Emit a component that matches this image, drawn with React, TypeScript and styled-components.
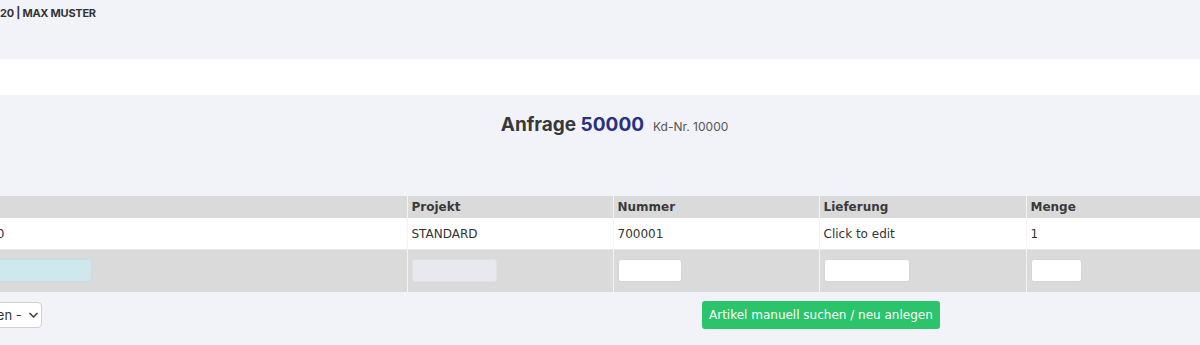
import React from 'react'
import styled, { createGlobalStyle } from 'styled-components'

const GlobalStyle = createGlobalStyle`
  html, body {
    margin: 0;
    padding: 0;
    background: #f2f3f8;
    overflow: hidden;
  }
  body {
    font-family: Inter, "Liberation Sans", sans-serif;
  }
`

const Viewport = styled.div`
  width: 1200px;
  height: 345px;
  overflow: hidden;
  background: #f2f3f8;
`

const TopBar = styled.div`
  height: 59px;
  box-sizing: border-box;
  padding: 6px 0 0 0;
  font-size: 11px;
  font-weight: 700;
  color: #333;
  letter-spacing: -0.25px;
  white-space: nowrap;
`

const Band = styled.div`
  height: 36px;
  background: #fff;
`

const TitleSection = styled.div`
  height: 101px;
  box-sizing: border-box;
  padding: 18px 0 0 29px;
  display: flex;
  justify-content: center;
  align-items: baseline;
  gap: 9px;
`

const Title = styled.h1`
  margin: 0;
  font-size: 19px;
  font-weight: 700;
  color: #38383a;
`

const DocNumber = styled.span`
  color: #28307f;
`

const CustomerNo = styled.span`
  font-size: 12px;
  color: #555;
`

const Table = styled.table`
  margin-left: -19px;
  width: 1400px;
  border-collapse: collapse;
  table-layout: fixed;
  font-family: "DejaVu Sans", Verdana, sans-serif;
  font-size: 12px;
  color: #333;
`

const HeadCell = styled.th`
  background: #dadada;
  height: 21px;
  padding: 0 4px;
  text-align: left;
  font-weight: 700;
  color: #3a3a3a;
  border-left: 1px solid #f4f4f4;
  &:first-child {
    border-left: none;
  }
`

const Row = styled.tr<{ $tone: 'white' | 'grey' }>`
  background: ${({ $tone }) => ($tone === 'white' ? '#fff' : '#dadada')};
  height: ${({ $tone }) => ($tone === 'white' ? '32px' : '42px')};
  border-top: 1px solid ${({ $tone }) => ($tone === 'white' ? '#dadada' : '#e8e8e8')};
`

const Cell = styled.td`
  padding: 0 4px;
  vertical-align: middle;
  border-left: 1px solid #f4f4f4;
  &:first-child {
    border-left: none;
    padding-left: 8px;
  }
`

const Field = styled.input<{ $w: number; $variant?: 'cyan' | 'muted' }>`
  display: block;
  box-sizing: border-box;
  width: ${({ $w }) => $w}px;
  height: 23px;
  border: 1px solid ${({ $variant }) => ($variant === 'cyan' ? '#c3dfe6' : $variant === 'muted' ? '#dfe0e5' : '#d6d6d6')};
  border-radius: 3px;
  background: ${({ $variant }) => ($variant === 'cyan' ? '#cfe8ee' : $variant === 'muted' ? '#e8e9ee' : '#fff')};
  margin: 0;
  font: inherit;
  padding: 2px 4px;
  outline: none;
`

const Actions = styled.div`
  display: flex;
  align-items: center;
  margin-top: 9px;
`

const SelectWrap = styled.div`
  position: relative;
  margin-left: -81px;
  width: 123px;
  height: 26px;
`

const Select = styled.select`
  appearance: none;
  width: 100%;
  height: 26px;
  box-sizing: border-box;
  border: 1px solid #cfcfcf;
  border-radius: 4px;
  background: #fff;
  font-family: Inter, "Liberation Sans", sans-serif;
  font-size: 13px;
  color: #333;
  padding: 0 16px 0 8px;
`

const Chevron = styled.svg`
  position: absolute;
  right: 4px;
  top: 10px;
  pointer-events: none;
`

const GreenButton = styled.button`
  margin-left: 660px;
  height: 28px;
  padding: 0 7px;
  border: none;
  border-radius: 3px;
  background: #2bc46b;
  color: #fff;
  font-family: "DejaVu Sans", Verdana, sans-serif;
  font-size: 12px;
  cursor: pointer;
`

const columns = [
  { label: '', width: 426 },
  { label: 'Projekt', width: 206 },
  { label: 'Nummer', width: 206 },
  { label: 'Lieferung', width: 207 },
  { label: 'Menge', width: 355 },
]

export default function App() {
  return (
    <Viewport>
      <GlobalStyle />
      <TopBar>20 | MAX MUSTER</TopBar>
      <Band />
      <TitleSection>
        <Title>
          Anfrage <DocNumber>50000</DocNumber>
        </Title>
        <CustomerNo>Kd-Nr. 10000</CustomerNo>
      </TitleSection>
      <Table>
        <colgroup>
          {columns.map((c, i) => (
            <col key={i} style={{ width: c.width }} />
          ))}
        </colgroup>
        <thead>
          <tr>
            {columns.map((c, i) => (
              <HeadCell key={i}>{c.label}</HeadCell>
            ))}
          </tr>
        </thead>
        <tbody>
          <Row $tone="white">
            <Cell>10</Cell>
            <Cell>STANDARD</Cell>
            <Cell>700001</Cell>
            <Cell>Click to edit</Cell>
            <Cell>1</Cell>
          </Row>
          <Row $tone="grey">
            <Cell>
              <Field $w={103} $variant="cyan" />
            </Cell>
            <Cell>
              <Field $w={85} $variant="muted" disabled />
            </Cell>
            <Cell>
              <Field $w={64} />
            </Cell>
            <Cell>
              <Field $w={86} />
            </Cell>
            <Cell>
              <Field $w={51} />
            </Cell>
          </Row>
        </tbody>
      </Table>
      <Actions>
        <SelectWrap>
          <Select defaultValue="none">
            <option value="none">- bitte wählen -</option>
          </Select>
          <Chevron width="9" height="7" viewBox="0 0 9 7">
            <path d="M1 1.5 L4.5 5 L8 1.5" fill="none" stroke="#444" strokeWidth="1.7" strokeLinecap="round" strokeLinejoin="round" />
          </Chevron>
        </SelectWrap>
        <GreenButton type="button">Artikel manuell suchen / neu anlegen</GreenButton>
      </Actions>
    </Viewport>
  )
}
